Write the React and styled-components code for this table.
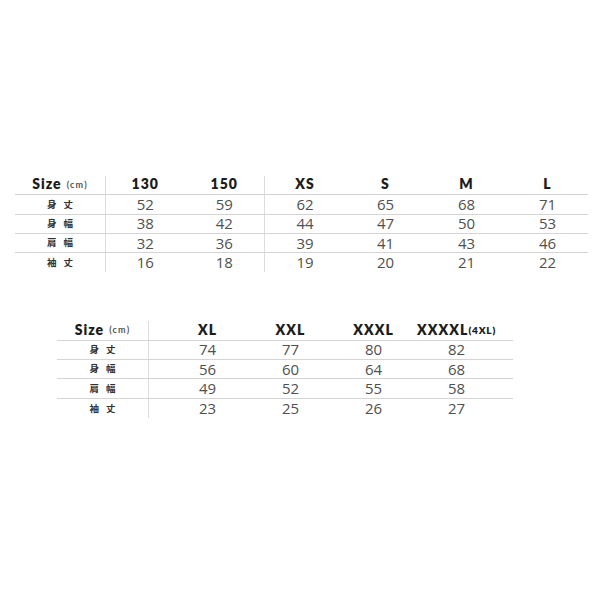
import React from "react";
import styled, { createGlobalStyle } from "styled-components";

const GlobalStyle = createGlobalStyle`
  html, body {
    margin: 0;
    padding: 0;
    background: #ffffff;
  }
`;

const Page = styled.div`
  width: 600px;
  height: 600px;
  box-sizing: border-box;
  padding-top: 176px;
  display: flex;
  flex-direction: column;
  gap: 49px;
`;

const Table = styled.div`
  margin-left: ${(p) => p.$left}px;
  width: ${(p) => p.$width}px;
  display: flex;
  flex-direction: column;
`;

const Row = styled.div`
  display: grid;
  grid-template-columns: ${(p) => p.$cols};
  height: 19.3px;
  box-sizing: border-box;
  border-bottom: ${(p) => (p.$last ? "none" : "1.5px solid #d4d4d4")};
`;

const Cell = styled.div`
  display: flex;
  align-items: center;
  justify-content: center;
  border-left: ${(p) => (p.$divider ? "1.5px solid #dcdcdc" : "none")};
  font-family: "Open Sans", "Liberation Sans", sans-serif;
  font-size: 15px;
  color: #505050;
  line-height: 1;
  white-space: nowrap;
`;

const HeadCell = styled(Cell)`
  font-family: "Lato", "DejaVu Sans", sans-serif;
  font-weight: 800;
  font-size: 14px;
  color: #1c1c1c;
  letter-spacing: 1.1px;
  padding-bottom: 2px;
`;

const SizeTitle = styled.span`
  font-family: "Lato", "DejaVu Sans", sans-serif;
  font-weight: 800;
  font-size: 14px;
  color: #1c1c1c;
  letter-spacing: 1px;
`;

const Unit = styled.span`
  font-family: "Lato", "DejaVu Sans", sans-serif;
  font-size: 9px;
  font-weight: 700;
  color: #555;
  margin-left: 5px;
  letter-spacing: 1.2px;
`;

const Small = styled.span`
  font-size: 10px;
  letter-spacing: 0.8px;
`;

const LabelCell = styled(Cell)`
  font-family: "Noto Sans CJK JP", "Noto Sans CJK SC", sans-serif;
  font-weight: 700;
  font-size: 9.5px;
  color: #333;
  letter-spacing: 7px;
  padding-left: 7px;
`;

const Spacer = styled.div`
  border-left: ${(p) => (p.$divider ? "1.5px solid #dcdcdc" : "none")};
`;

const labels = ["身丈", "身幅", "肩幅", "袖丈"];

const table1 = {
  heads: ["130", "150", "XS", "S", "M", "L"],
  rows: [
    [52, 59, 62, 65, 68, 71],
    [38, 42, 44, 47, 50, 53],
    [32, 36, 39, 41, 43, 46],
    [16, 18, 19, 20, 21, 22],
  ],
};

const table2 = {
  heads: ["XL", "XXL", "XXXL", "XXXXL"],
  rows: [
    [74, 77, 80, 82],
    [56, 60, 64, 68],
    [49, 52, 55, 58],
    [23, 25, 26, 27],
  ],
};

const SizeHeader = () => (
  <HeadCell>
    <SizeTitle>Size</SizeTitle>
    <Unit>(cm)</Unit>
  </HeadCell>
);

const FirstTable = () => {
  const cols = "90px 79.5px 79.5px 81px 81px 81px 81px";
  return (
    <Table $left={15} $width={573}>
      <Row $cols={cols}>
        <SizeHeader />
        {table1.heads.map((h, i) => (
          <HeadCell key={h} $divider={i === 0 || i === 2}>
            {h}
          </HeadCell>
        ))}
      </Row>
      {table1.rows.map((r, ri) => (
        <Row key={ri} $cols={cols} $last={ri === table1.rows.length - 1}>
          <LabelCell>{labels[ri]}</LabelCell>
          {r.map((v, i) => (
            <Cell key={i} $divider={i === 0 || i === 2}>
              {v}
            </Cell>
          ))}
        </Row>
      ))}
    </Table>
  );
};

const SecondTable = () => {
  const cols = "91px 18px 83px 83px 83px 83px 15px";
  return (
    <Table $left={57} $width={456}>
      <Row $cols={cols}>
        <SizeHeader />
        <Spacer $divider />
        {table2.heads.map((h, i) => (
          <HeadCell key={h}>
            {h}
            {i === 3 && <Small>(4XL)</Small>}
          </HeadCell>
        ))}
        <Spacer />
      </Row>
      {table2.rows.map((r, ri) => (
        <Row key={ri} $cols={cols} $last={ri === table2.rows.length - 1}>
          <LabelCell>{labels[ri]}</LabelCell>
          <Spacer $divider />
          {r.map((v, i) => (
            <Cell key={i}>{v}</Cell>
          ))}
          <Spacer />
        </Row>
      ))}
    </Table>
  );
};

export default function App() {
  return (
    <>
      <GlobalStyle />
      <Page>
        <FirstTable />
        <SecondTable />
      </Page>
    </>
  );
}
